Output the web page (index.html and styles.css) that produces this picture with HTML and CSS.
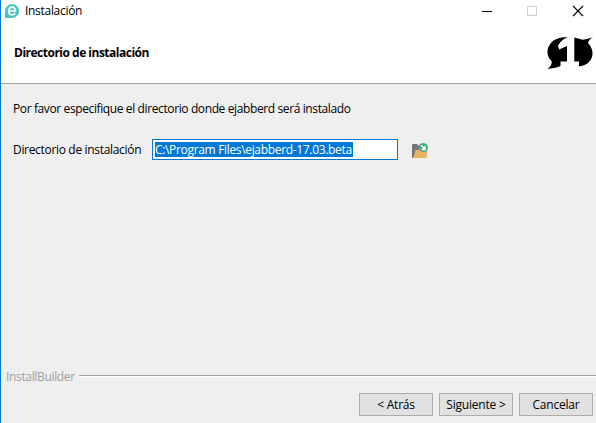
FILE: index.html
```html
<!DOCTYPE html>
<html lang="es">
<head>
<meta charset="utf-8">
<title>Instalación</title>
<link rel="stylesheet" href="styles.css">
</head>
<body>
<div class="window">
  <header class="titlebar">
    <svg class="app-icon" width="16" height="16" viewBox="0 0 16 16"><path d="M1 15V7.500A7 7 0 1 1 8 15Z" fill="#48c5c1"/><path d="M4.700 8H11.400C11.400 2.800 4.700 2.800 4.700 8S9.500 12 11.300 10.400" fill="none" stroke="#fff" stroke-width="1.700"/></svg>
    <span class="title">Instalación</span>
    <div class="controls">
      <svg width="12" height="12" viewBox="0 0 12 12"><path d="M0 6.500H10" stroke="#000"/></svg>
      <svg width="12" height="12" viewBox="0 0 12 12"><path d="M.5 1.500H9.500V10.500H.5Z" fill="none" stroke="#ccc"/></svg>
      <svg width="12" height="12" viewBox="0 0 12 12"><path d="M1 1L11 11M11 1L1 11" stroke="#000" stroke-width="1.100"/></svg>
    </div>
  </header>
  <section class="banner">
    <h1>Directorio de instalación</h1>
    <svg width="48" height="34" viewBox="0 0 48 34"><path d="M21.700 1.300C15 1 8.500 2.500 4.500 7.500C.2 13 .3 20 5.700 25.200C6 28.500 4.500 31 1.300 32.700C6 32.700 10.500 32 14.500 30V25.500H21V10L13.200 13.500L12 9.700C14.500 5.500 17 3 21.700 1.300Z"/><path d="M28.300 1.500L36.700 3.700C40.500 3.300 43.500 2.500 46.900 1C44.500 2.600 42.800 4.400 42 7C48.500 14 47.500 22 42.300 26.700C39.500 29 36.500 30 33 30.300V25.500H28.300Z"/></svg>
  </section>
  <main>
    <p class="intro">Por favor especifique el directorio donde ejabberd será instalado</p>
    <div class="field">
      <label>Directorio de instalación</label>
      <div class="input"><span>C:\Program Files\ejabberd-17.03.beta</span></div>
      <svg class="folder" width="18" height="18" viewBox="0 0 18 18"><path d="M1 16V3Q1 2 2 2H6L8 4V9L2 16Z" fill="#777"/><path d="M2.500 16L4.500 8H16.500L15.500 16Z" fill="#e8b566"/><circle cx="12.300" cy="5.500" r="4.600" fill="#43aa80"/><path d="M10 3.300L14 7.300M14 3.800V7.500H10.500" stroke="#fff" stroke-width="1.300" fill="none"/></svg>
    </div>
  </main>
  <footer>
    <div class="brand"><span>InstallBuilder</span><i></i></div>
    <div class="buttons">
      <button class="back">&lt; Atrás</button>
      <button class="next">Siguiente &gt;</button>
      <button class="cancel">Cancelar</button>
    </div>
  </footer>
</div>
</body>
</html>
```

FILE: styles.css
```css
* { box-sizing: border-box; }
body { margin: 0; font: 12px/16px "Open Sans", "Noto Sans", sans-serif; color: #000; }
svg { display: block; flex: none; }
.window { height: 423px; display: flex; flex-direction: column; background: #efefef; border-left: 1px solid #0078d7; overflow: hidden; white-space: nowrap; }
.titlebar { height: 23px; display: flex; align-items: center; padding: 0 12px 1px 3px; background: #fff; }
.title { margin-left: 5px; letter-spacing: -0.3px; }
.controls { display: flex; gap: 33px; margin-left: auto; }
.banner { height: 61px; display: flex; justify-content: space-between; align-items: center; padding: 0 2px 0 13px; background: #fff; border-bottom: 1px solid #a0a0a0; }
h1 { margin: 0; font-size: 12px; line-height: 16px; letter-spacing: -0.5px; }
main { flex: 1; padding: 17px 0 0 12px; }
.intro { margin: 0; letter-spacing: -0.385px; }
.field { display: flex; align-items: center; height: 22px; margin-top: 21px; }
label { width: 139px; padding-top: 2px; letter-spacing: -0.32px; }
.input { width: 246px; height: 21px; padding: 2px; border: 1px solid #0078d7; background: #fff; }
.input span { display: block; width: 198px; height: 15px; line-height: 16px; background: #0078d7; color: #fff; letter-spacing: -0.33px; }
.folder { margin: 3px 0 0 13px; }
.brand { display: flex; align-items: center; height: 16px; padding-left: 5px; color: #a0a0a0; }
.brand span { width: 73px; padding-top: 2px; letter-spacing: -0.34px; }
.brand i { flex: 1; height: 2px; background: #fff; border-top: 1px solid #a0a0a0; }
footer { height: 55px; }
.buttons { display: flex; justify-content: flex-end; gap: 6px; padding: 9px 3px 0 0; }
button { width: 74px; height: 23px; padding: 0; border: 1px solid #adadad; background: #e1e1e1; color: #000; font: inherit; letter-spacing: -0.2px; }
```
